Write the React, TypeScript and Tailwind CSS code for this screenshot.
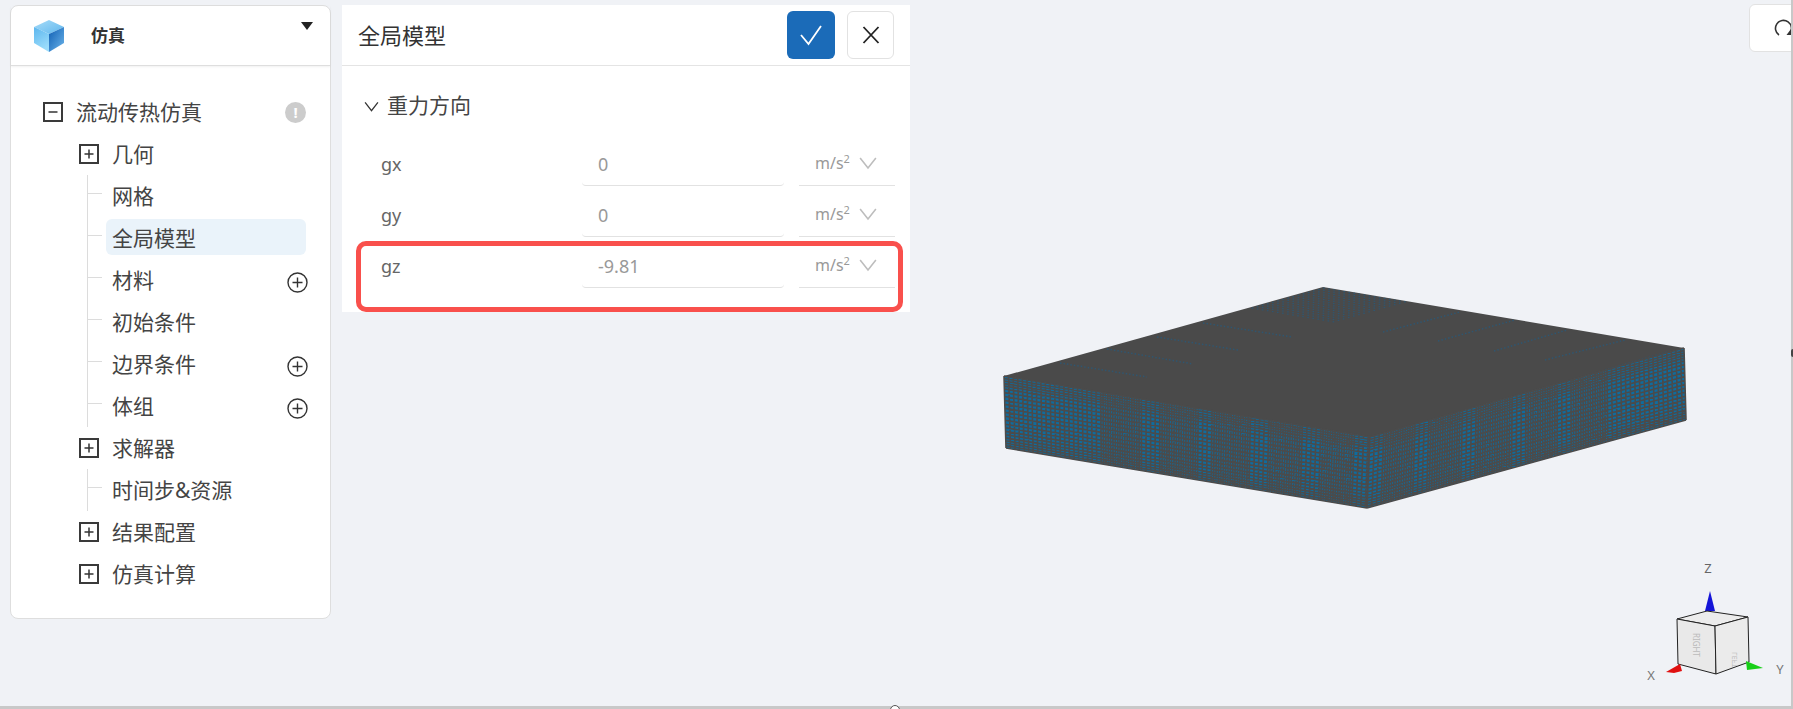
import type { ReactNode } from "react";

type Pt = [number, number];

const lerp = (a: Pt, b: Pt, t: number): Pt => [a[0] + (b[0] - a[0]) * t, a[1] + (b[1] - a[1]) * t];

// Graded mesh stops: cells open up inside [start, end] bands, tighter elsewhere
const gradedStops = (bands: Pt[], wide: number, fine: number, length: number) => {
  const stops: number[] = [];
  let x = 0;
  while (x < length) {
    stops.push(x / length);
    const inBand = bands.some(([s, e]) => x >= s && x <= e);
    x += inBand ? wide : fine;
  }
  stops.push(1);
  return stops;
};

// Layers are thinner at the top and bottom of the block
const rowStops = [0, 0.035, 0.07, 0.105, 0.14, 0.18, 0.23, 0.285, 0.34, 0.395, 0.45, 0.505, 0.56, 0.615, 0.67, 0.72, 0.77, 0.815, 0.86, 0.9, 0.935, 0.97, 1];

function MeshFace({ corners, bands, length }: { corners: [Pt, Pt, Pt, Pt]; bands: Pt[]; length: number }) {
  const [tl, tr, br, bl] = corners;
  const cols = gradedStops(bands, 4.6, 2.4, length);
  const d: string[] = [];
  cols.forEach((u) => {
    const a = lerp(tl, tr, u);
    const b = lerp(bl, br, u);
    d.push(`M${a[0].toFixed(1)} ${a[1].toFixed(1)}L${b[0].toFixed(1)} ${b[1].toFixed(1)}`);
  });
  rowStops.forEach((v) => {
    const a = lerp(tl, bl, v);
    const b = lerp(tr, br, v);
    d.push(`M${a[0].toFixed(1)} ${a[1].toFixed(1)}L${b[0].toFixed(1)} ${b[1].toFixed(1)}`);
  });
  return (
    <g>
      <polygon points={corners.map((p) => p.join(",")).join(" ")} fill="#0f6c9e" />
      <path d={d.join("")} stroke="#4b4b4b" strokeWidth={1.6} fill="none" />
    </g>
  );
}

// Dotted patch near the back corner of the top face
function backCornerDots() {
  const back: Pt = [1323, 287];
  const left: Pt = [1004, 376];
  const right: Pt = [1684, 348];
  const dots: ReactNode[] = [];
  for (let a = 0.004; a < 0.23; a += 0.016) {
    for (let b = 0.004; b < 0.23; b += 0.014) {
      const x = back[0] + (left[0] - back[0]) * a + (right[0] - back[0]) * b;
      const y = back[1] + (left[1] - back[1]) * a + (right[1] - back[1]) * b;
      dots.push(<rect key={`${a}-${b}`} x={x} y={y} width={1.6} height={1.2} fill="#2f5670" />);
    }
  }
  return dots;
}

const seamLines: [number, number, number, number][] = [
  [1060, 363, 1147, 377],
  [1107, 349, 1193, 364],
  [1157, 337, 1238, 350],
  [1203, 323, 1292, 337],
  [1383, 332, 1460, 312],
  [1438, 341, 1515, 320],
  [1494, 351, 1567, 330],
  [1545, 360, 1625, 340],
  [1605, 370, 1668, 352],
];

function ModelView() {
  return (
    <svg className="absolute inset-0 h-full w-full" viewBox="0 0 1793 706">
      <polygon points="1004,376 1323,287 1684,348 1370,437" fill="#4a4a4a" />
      {backCornerDots()}
      {seamLines.map(([x1, y1, x2, y2]) => (
        <line key={x1} x1={x1} y1={y1} x2={x2} y2={y2} stroke="#2f5670" strokeWidth={1.5} strokeDasharray="1.5 2" />
      ))}
      <MeshFace
        corners={[[1004, 376], [1370, 437], [1367, 508], [1006, 448]]}
        bands={[[0, 95], [136, 152], [192, 208], [246, 262], [298, 314], [350, 366]]}
        length={366}
      />
      <MeshFace
        corners={[[1370, 437], [1684, 348], [1686, 420], [1367, 508]]}
        bands={[[0, 12], [44, 58], [92, 106], [140, 154], [186, 200], [235, 314]]}
        length={314}
      />
    </svg>
  );
}

// Orientation cube in the lower right corner
function AxisCube() {
  return (
    <svg className="absolute bottom-0 right-0 h-[150px] w-[173px]" viewBox="0 -14 173 150">
      <polygon points="90,21 85,41 95,41" fill="#1414d8" />
      <polygon points="57,49 87,41 128,47 95,56" fill="#ececec" stroke="#222" strokeWidth={1} />
      <polygon points="57,49 95,56 96,104 58,94" fill="#e9e9e9" stroke="#222" strokeWidth={1} />
      <polygon points="95,56 128,47 129,92 96,104" fill="#ebebeb" stroke="#222" strokeWidth={1} />
      <polygon points="46,102 60,94 62,101 54,103" fill="#e01010" />
      <polygon points="126,91 143,98 127,100" fill="#18d018" />
      <text x="0" y="0" transform="translate(73,63) rotate(90)" fontSize="8" fill="#bbb">RIGHT</text>
      <text x="0" y="0" transform="translate(117,82) rotate(-90) scale(-1,1)" fontSize="7" fill="#bbb">LEFT</text>
      <text x="88" y="3" fontSize="13" fill="#666" textAnchor="middle">Z</text>
      <text x="31" y="110" fontSize="13" fill="#777" textAnchor="middle">X</text>
      <text x="160" y="104" fontSize="13" fill="#777" textAnchor="middle">Y</text>
    </svg>
  );
}

function LogoCube() {
  return (
    <svg className="h-[32px] w-[32px] shrink-0" viewBox="0 0 32 32">
      <defs>
        <linearGradient id="cubeTop" x1="0" y1="0" x2="1" y2="1">
          <stop offset="0" stopColor="#a8dcf8" />
          <stop offset="1" stopColor="#5fb7ee" />
        </linearGradient>
        <linearGradient id="cubeLeft" x1="0" y1="0" x2="0.4" y2="1">
          <stop offset="0" stopColor="#5cb6ee" />
          <stop offset="1" stopColor="#9bdcfb" />
        </linearGradient>
        <linearGradient id="cubeRight" x1="0" y1="0" x2="1" y2="1">
          <stop offset="0" stopColor="#0f5fb4" />
          <stop offset="1" stopColor="#6db5ea" />
        </linearGradient>
      </defs>
      <polygon points="16,0 31,7 16,14 1,7" fill="url(#cubeTop)" />
      <polygon points="1,7 16,14 16,32 1,23" fill="url(#cubeLeft)" />
      <polygon points="31,7 16,14 16,32 31,23" fill="url(#cubeRight)" />
    </svg>
  );
}

function BoxToggle({ open }: { open?: boolean }) {
  return (
    <svg className="h-[20px] w-[20px] shrink-0" viewBox="0 0 20 20" fill="none">
      <rect x="1" y="1" width="18" height="18" stroke="#3a3a3a" strokeWidth="2" />
      <path d={open ? "M5.5 10H14.5" : "M5.5 10H14.5M10 5.5V14.5"} stroke="#333" strokeWidth="1.5" />
    </svg>
  );
}

function AddCircle() {
  return (
    <svg className="mt-[4px] h-[21px] w-[21px] shrink-0" viewBox="0 0 21 21" fill="none">
      <circle cx="10.5" cy="10.5" r="9.5" stroke="#333" strokeWidth="1.4" />
      <path d="M5.5 10.5H15.5M10.5 5.5V15.5" stroke="#333" strokeWidth="1.4" />
    </svg>
  );
}

function Chevron({ className, color }: { className: string; color: string }) {
  return (
    <svg className={className} viewBox="0 0 16 12" fill="none">
      <path d="M1 1.5L8 10.5L15 1.5" stroke={color} strokeWidth="1.4" />
    </svg>
  );
}

function GroupRow({ label }: { label: string }) {
  return (
    <div className="ml-[36px] flex h-[42px] items-center gap-[13px]">
      <BoxToggle />
      <span>{label}</span>
    </div>
  );
}

function LeafRow({ label, active, add }: { label: string; active?: boolean; add?: boolean }) {
  return (
    <div className="flex h-[42px] w-[220px] items-center">
      <span className="-mt-[6px] h-px w-[14px] shrink-0 bg-[#dcdcdc]" />
      <span
        className={`-mt-[2px] ml-[4px] flex h-[36px] items-center rounded-md pl-[6px] pt-[2px] ${
          active ? "w-[200px] bg-[#eaf3fa]" : "flex-1"
        }`}
      >
        {label}
      </span>
      {add && <AddCircle />}
    </div>
  );
}

function LeafGroup({ children }: { children: ReactNode }) {
  return <div className="ml-[44px] border-l border-[#dcdcdc]">{children}</div>;
}

function Sidebar() {
  return (
    <aside className="h-[614px] w-[321px] shrink-0 rounded-lg border border-[#dedede] bg-white text-[21px] leading-none text-[#444]">
      <div className="flex h-[60px] items-center border-b border-[#dedede] pl-[22px] pr-[17px] shadow-[0_1px_2px_rgba(0,0,0,0.06)]">
        <LogoCube />
        <span className="ml-[26px] text-[17px] font-bold text-[#333]">仿真</span>
        <span className="-mt-[20px] ml-auto h-0 w-0 border-x-[6px] border-t-[8px] border-x-transparent border-t-[#222]" />
      </div>
      <div className="pl-[32px] pt-[25px]">
        <div className="flex h-[42px] w-[263px] items-center gap-[13px]">
          <BoxToggle open />
          <span>流动传热仿真</span>
          <span className="ml-auto flex h-[21px] w-[21px] items-center justify-center rounded-full bg-[#cccccc] text-[15px] font-bold text-white">
            !
          </span>
        </div>
        <GroupRow label="几何" />
        <LeafGroup>
          <LeafRow label="网格" />
          <LeafRow label="全局模型" active />
          <LeafRow label="材料" add />
          <LeafRow label="初始条件" />
          <LeafRow label="边界条件" add />
          <LeafRow label="体组" add />
        </LeafGroup>
        <GroupRow label="求解器" />
        <LeafGroup>
          <LeafRow label="时间步&资源" />
        </LeafGroup>
        <GroupRow label="结果配置" />
        <GroupRow label="仿真计算" />
      </div>
    </aside>
  );
}

function GravityRow({ axis, value }: { axis: string; value: string }) {
  return (
    <div className="flex h-[51px] text-[18px] leading-none">
      <div className="flex h-[46px] w-[240px] items-center pl-[39px] pt-[2px] text-[#666]">{axis}</div>
      <div className="flex h-[46px] w-[202px] items-center rounded-b border-b border-[#e2e2e2] pl-[16px] pt-[2px] text-[#999]">
        {value}
      </div>
      <div className="ml-[15px] flex h-[46px] w-[96px] items-center border-b border-[#e2e2e2] pl-[16px] text-[16px] text-[#999]">
        <span>
          m/s<sup className="text-[11px]">2</sup>
        </span>
        <Chevron className="ml-[9px] h-[14px] w-[18px]" color="#bdbdbd" />
      </div>
    </div>
  );
}

function GravityPanel() {
  return (
    <section className="relative h-[307px] w-[568px] shrink-0 bg-white">
      <div className="flex h-[61px] items-center border-b border-[#e4e4e4] pl-[16px] pr-[16px]">
        <h2 className="text-[22px] font-normal text-[#333]">全局模型</h2>
        <button className="ml-auto flex h-[48px] w-[48px] items-center justify-center rounded-md bg-[#1b6bb8]">
          <svg className="h-[22px] w-[24px]" viewBox="0 0 24 22" fill="none">
            <path d="M2 11L9.5 20L22 2" stroke="white" strokeWidth="1.8" />
          </svg>
        </button>
        <button className="ml-[12px] flex h-[48px] w-[47px] items-center justify-center rounded-md border border-[#e2e2e2] bg-white">
          <svg className="h-[18px] w-[18px]" viewBox="0 0 18 18" fill="none">
            <path d="M1.5 1L16.5 17M16.5 1L1.5 17" stroke="#222" strokeWidth="1.8" />
          </svg>
        </button>
      </div>
      <div className="mt-[22px] flex h-[36px] items-center pl-[22px] text-[21px] text-[#444]">
        <Chevron className="h-[11px] w-[15px]" color="#333" />
        <span className="ml-[8px]">重力方向</span>
      </div>
      <div className="mt-[16px]">
        <GravityRow axis="gx" value="0" />
        <GravityRow axis="gy" value="0" />
        <GravityRow axis="gz" value="-9.81" />
      </div>
      {/* callout around the gz row */}
      <div className="absolute left-[14px] top-[236px] h-[71px] w-[547px] rounded-[10px] border-[5px] border-[#f9504c]" />
    </section>
  );
}

export default function App() {
  return (
    <div className="relative flex h-[709px] w-[1793px] flex-col overflow-hidden bg-[#f0f2f6] font-['Noto_Sans','Noto_Sans_CJK_SC',sans-serif]">
      <main className="relative flex flex-1 items-start gap-[11px] pl-[10px] pt-[5px]">
        <ModelView />
        <AxisCube />
        <div className="relative">
          <Sidebar />
        </div>
        <div className="relative">
          <GravityPanel />
        </div>
        {/* reset view button, clipped by the window edge */}
        <button className="absolute -right-[6px] top-[4px] flex h-[48px] w-[50px] items-center justify-start rounded-md border border-[#e2e2e2] bg-white pl-[24px]">
          <svg className="h-[20px] w-[20px] shrink-0" viewBox="0 0 20 20" fill="none">
            <path d="M5 17A8 8 0 1 1 16 15" stroke="#333" strokeWidth="1.6" />
            <path d="M12.5 17L18 17L17 11Z" fill="#333" />
          </svg>
        </button>
        <span className="absolute right-0 top-0 h-full w-[2px] bg-[#c8c8c8]" />
        <span className="absolute right-0 top-[349px] h-[8px] w-[2px] rounded-l-full bg-[#444]" />
      </main>
      <div className="relative h-[3px] shrink-0 bg-[#c8c8c8]">
        <span className="absolute -top-[1px] left-[890px] h-[10px] w-[10px] rounded-full border border-[#555] bg-white" />
      </div>
    </div>
  );
}
